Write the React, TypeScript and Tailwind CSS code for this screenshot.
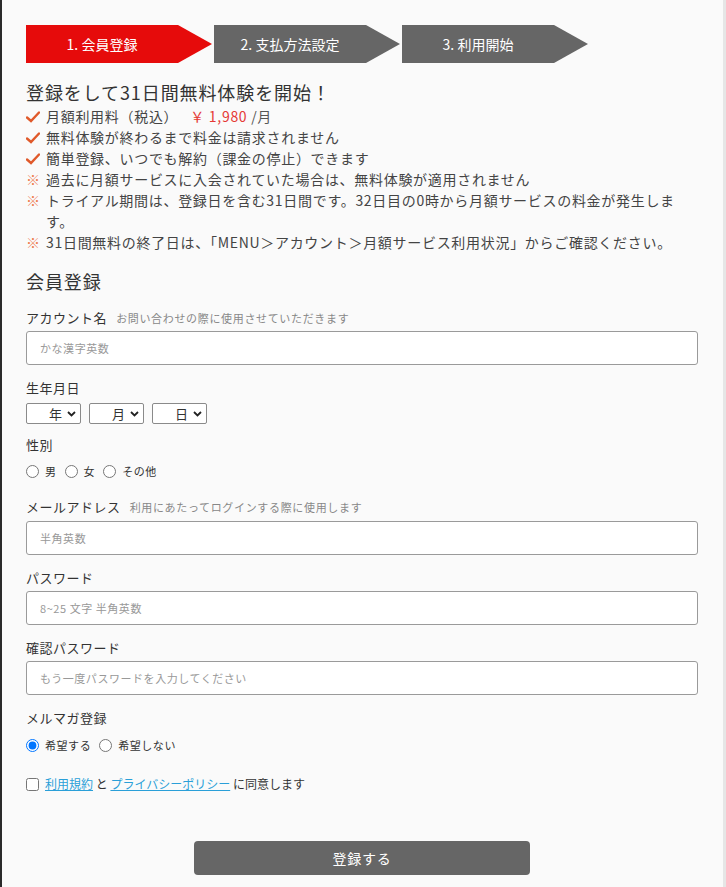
import { useState } from 'react'

const STEPS = ['1. 会員登録', '2. 支払方法設定', '3. 利用開始']

const NOTES: { kind: 'check' | 'note'; text: React.ReactNode }[] = [
  {
    kind: 'check',
    text: (
      <>
        月額利用料（税込）<span className="ml-[12px] text-[#e53935]">￥ 1,980</span>
        <span className="text-[#555]"> /月</span>
      </>
    ),
  },
  { kind: 'check', text: '無料体験が終わるまで料金は請求されません' },
  { kind: 'check', text: '簡単登録、いつでも解約（課金の停止）できます' },
  { kind: 'note', text: '過去に月額サービスに入会されていた場合は、無料体験が適用されません' },
  {
    kind: 'note',
    text: 'トライアル期間は、登録日を含む31日間です。32日目の0時から月額サービスの料金が発生します。',
  },
  { kind: 'note', text: '31日間無料の終了日は、「MENU＞アカウント＞月額サービス利用状況」からご確認ください。' },
]

function Step({ label, active }: { label: string; active: boolean }) {
  const color = active ? '#e60b0b' : '#666666'
  return (
    <div className="flex h-[38px] w-[186px]">
      <div
        className={`flex h-full w-[152px] items-center justify-center text-[14px] text-white ${
          active ? 'bg-[#e60b0b]' : 'bg-[#666666]'
        }`}
      >
        {label}
      </div>
      <svg width="34" height="38" viewBox="0 0 34 38" className="block">
        <polygon points="0,0 34,19 0,38" fill={color} />
      </svg>
    </div>
  )
}

function CheckIcon() {
  return (
    <svg width="14" height="12" viewBox="0 0 14 12" className="mt-[5px] block">
      <path d="M1 6.5 L5 10 L13 1.5" fill="none" stroke="#e0592a" strokeWidth="2.4" strokeLinecap="round" />
    </svg>
  )
}

function Label({ title, hint }: { title: string; hint?: string }) {
  return (
    <div className="flex items-baseline leading-[20px]">
      <span className="text-[13px] tracking-[0.04em] text-[#333]">{title}</span>
      {hint && <span className="ml-[9px] text-[11px] tracking-[0.06em] text-[#888]">{hint}</span>}
    </div>
  )
}

function TextInput({ placeholder, type = 'text' }: { placeholder: string; type?: string }) {
  return (
    <input
      type={type}
      placeholder={placeholder}
      className="block h-[34px] w-full rounded-[3px] border border-[#9a9a9a] bg-white px-[13px] text-[11px] tracking-[0.05em] text-[#333] outline-none placeholder:text-[#999]"
    />
  )
}

function FakeSelect({ label }: { label: string }) {
  return (
    <div className="flex h-[21px] w-[55px] items-center justify-end gap-[5px] rounded-[2px] border border-[#8a8a8a] bg-white pr-[4px] text-[13px] text-[#333]">
      <span>{label}</span>
      <svg width="9" height="6" viewBox="0 0 9 6" className="block">
        <path d="M1 1 L4.5 4.5 L8 1" fill="none" stroke="#222" strokeWidth="1.8" />
      </svg>
    </div>
  )
}

function Radio({ name, label, checked }: { name: string; label: string; checked?: boolean }) {
  return (
    <label className="mr-[8px] flex items-center">
      <input
        type="radio"
        name={name}
        defaultChecked={checked}
        className="m-0 h-[13px] w-[13px] accent-[#0075ff]"
      />
      <span className="ml-[6px] text-[11px] tracking-[0.05em] text-[#333]">{label}</span>
    </label>
  )
}

export default function App() {
  const [agreed, setAgreed] = useState(false)

  return (
    <div
      className="min-h-[887px] border-l-2 border-r-[3px] border-l-[#2a2a2a] border-r-[#e6e6e6] bg-[#fafafa] pl-[24px] pr-[25px] pt-[25px] pb-[12px] text-[#333]"
      style={{ fontFamily: '"Noto Sans CJK JP", "Noto Sans", sans-serif' }}
    >
      <div className="flex gap-[2px]">
        {STEPS.map((s, i) => (
          <Step key={s} label={s} active={i === 0} />
        ))}
      </div>

      <h1 className="mt-[17px] text-[18px] leading-[24px] tracking-[0.05em] text-[#333]">
        登録をして31日間無料体験を開始！
      </h1>

      <ul className="mt-[2px] text-[14px] leading-[21px] tracking-[0.05em] text-[#444]">
        {NOTES.map((n, i) => (
          <li key={i} className="flex">
            <span className="flex w-[20px] shrink-0">
              {n.kind === 'check' ? <CheckIcon /> : <span className="text-[#ee7b4f]">※</span>}
            </span>
            <span>{n.text}</span>
          </li>
        ))}
      </ul>

      <h2 className="mt-[16px] text-[18px] leading-[24px] tracking-[0.05em] text-[#333]">会員登録</h2>

      <div className="mt-[15px]">
        <Label title="アカウント名" hint="お問い合わせの際に使用させていただきます" />
      </div>
      <div className="mt-[3px]">
        <TextInput placeholder="かな漢字英数" />
      </div>

      <div className="mt-[13px]">
        <Label title="生年月日" />
      </div>
      <div className="mt-[5px] flex gap-[8px]">
        <FakeSelect label="年" />
        <FakeSelect label="月" />
        <FakeSelect label="日" />
      </div>

      <div className="mt-[11px]">
        <Label title="性別" />
      </div>
      <div className="mt-[6px] flex h-[20px] items-center">
        <Radio name="sex" label="男" />
        <Radio name="sex" label="女" />
        <Radio name="sex" label="その他" />
      </div>

      <div className="mt-[16px]">
        <Label title="メールアドレス" hint="利用にあたってログインする際に使用します" />
      </div>
      <div className="mt-[4px]">
        <TextInput placeholder="半角英数" type="email" />
      </div>

      <div className="mt-[13px]">
        <Label title="パスワード" />
      </div>
      <div className="mt-[3px]">
        <TextInput placeholder="8~25 文字 半角英数" type="password" />
      </div>

      <div className="mt-[13px]">
        <Label title="確認パスワード" />
      </div>
      <div className="mt-[3px]">
        <TextInput placeholder="もう一度パスワードを入力してください" type="password" />
      </div>

      <div className="mt-[13px]">
        <Label title="メルマガ登録" />
      </div>
      <div className="mt-[7px] flex h-[20px] items-center">
        <Radio name="mailmag" label="希望する" checked />
        <Radio name="mailmag" label="希望しない" />
      </div>

      <label className="mt-[19px] flex h-[20px] items-center text-[12px] text-[#333]">
        <input
          type="checkbox"
          checked={agreed}
          onChange={(e) => setAgreed(e.target.checked)}
          className="m-0 h-[13px] w-[13px]"
        />
        <span className="ml-[6px]">
          <a href="#" className="text-[#2a9fd8] underline">
            利用規約
          </a>{' '}
          と{' '}
          <a href="#" className="text-[#2a9fd8] underline">
            プライバシーポリシー
          </a>{' '}
          に同意します
        </span>
      </label>

      <div className="mt-[47px] flex justify-center">
        <button
          type="button"
          className="h-[34px] w-[336px] rounded-[4px] bg-[#666] text-[14px] tracking-[0.05em] text-white"
        >
          登録する
        </button>
      </div>
    </div>
  )
}
